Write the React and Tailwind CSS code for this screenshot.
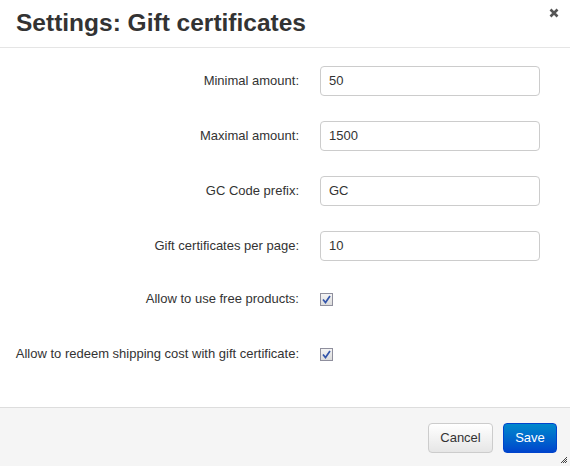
const fields = [
  { label: 'Minimal amount:', value: '50' },
  { label: 'Maximal amount:', value: '1500' },
  { label: 'GC Code prefix:', value: 'GC' },
  { label: 'Gift certificates per page:', value: '10' },
];

const checks = [
  { label: 'Allow to use free products:' },
  { label: 'Allow to redeem shipping cost with gift certificate:' },
];

const CheckBox = () => (
  <span className="w-[13px] h-[13px] border border-[#8f8f9d] bg-gradient-to-b from-[#f4f4f4] to-[#dcdcdc] flex items-center justify-center">
    <svg width="9" height="9" viewBox="0 0 9 9">
      <path d="M1 4.5 L3.5 7.5 L8 1" fill="none" stroke="#3355aa" strokeWidth="1.7" />
    </svg>
  </span>
);

export default function App() {
  return (
    <div className="w-[570px] h-[466px] bg-white flex flex-col relative font-['Liberation_Sans',Arial,sans-serif] text-[#333]">
      <div className="h-[48px] border-b border-[#e5e5e5] flex items-start px-[16px] pt-[7px] relative">
        <h1 className="text-[24.5px] font-bold leading-[32px] text-[#333]">Settings: Gift certificates</h1>
        <svg className="absolute right-[11px] top-[8px]" width="10" height="10" viewBox="0 0 10 10">
          <path d="M1.5 1.5 L8.5 8.5 M8.5 1.5 L1.5 8.5" stroke="#555" strokeWidth="2.6" />
        </svg>
      </div>

      <div className="flex-1 flex flex-col pt-[18px]">
        {fields.map((f) => (
          <div key={f.label} className="flex items-center h-[30px] mb-[25px]">
            <label className="w-[300px] pr-[1px] text-right text-[13px]">{f.label}</label>
            <div className="ml-[20px] w-[220px] h-[30px] border border-[#ccc] rounded-[4px] flex items-center px-[8px] text-[13px] text-[#333]">
              {f.value}
            </div>
          </div>
        ))}
        {checks.map((c, i) => (
          <div key={c.label} className={`flex items-center h-[30px] ${i === 0 ? '-mt-[2px] mb-[25px]' : ''}`}>
            <label className="w-[300px] pr-[1px] text-right text-[13px]">{c.label}</label>
            <div className="ml-[20px] flex items-center">
              <CheckBox />
            </div>
          </div>
        ))}
      </div>

      <div className="h-[59px] border-t border-[#ddd] bg-[#f5f5f5] flex justify-end items-start pt-[15px] pr-[13px] gap-[10px]">
        <button className="w-[65px] h-[30px] rounded-[4px] border border-[#ccc] bg-gradient-to-b from-white to-[#e6e6e6] text-[13px] text-[#333]">
          Cancel
        </button>
        <button className="w-[54px] h-[30px] rounded-[4px] border border-[#04c] bg-gradient-to-b from-[#08c] to-[#04c] text-[13px] text-white">
          Save
        </button>
        <svg className="absolute right-[2px] bottom-[2px]" width="8" height="8" viewBox="0 0 8 8">
          <path d="M7 1 L1 7 M7 3 L3 7 M7 5 L5 7" stroke="#444" strokeWidth="1" />
        </svg>
      </div>
    </div>
  );
}
